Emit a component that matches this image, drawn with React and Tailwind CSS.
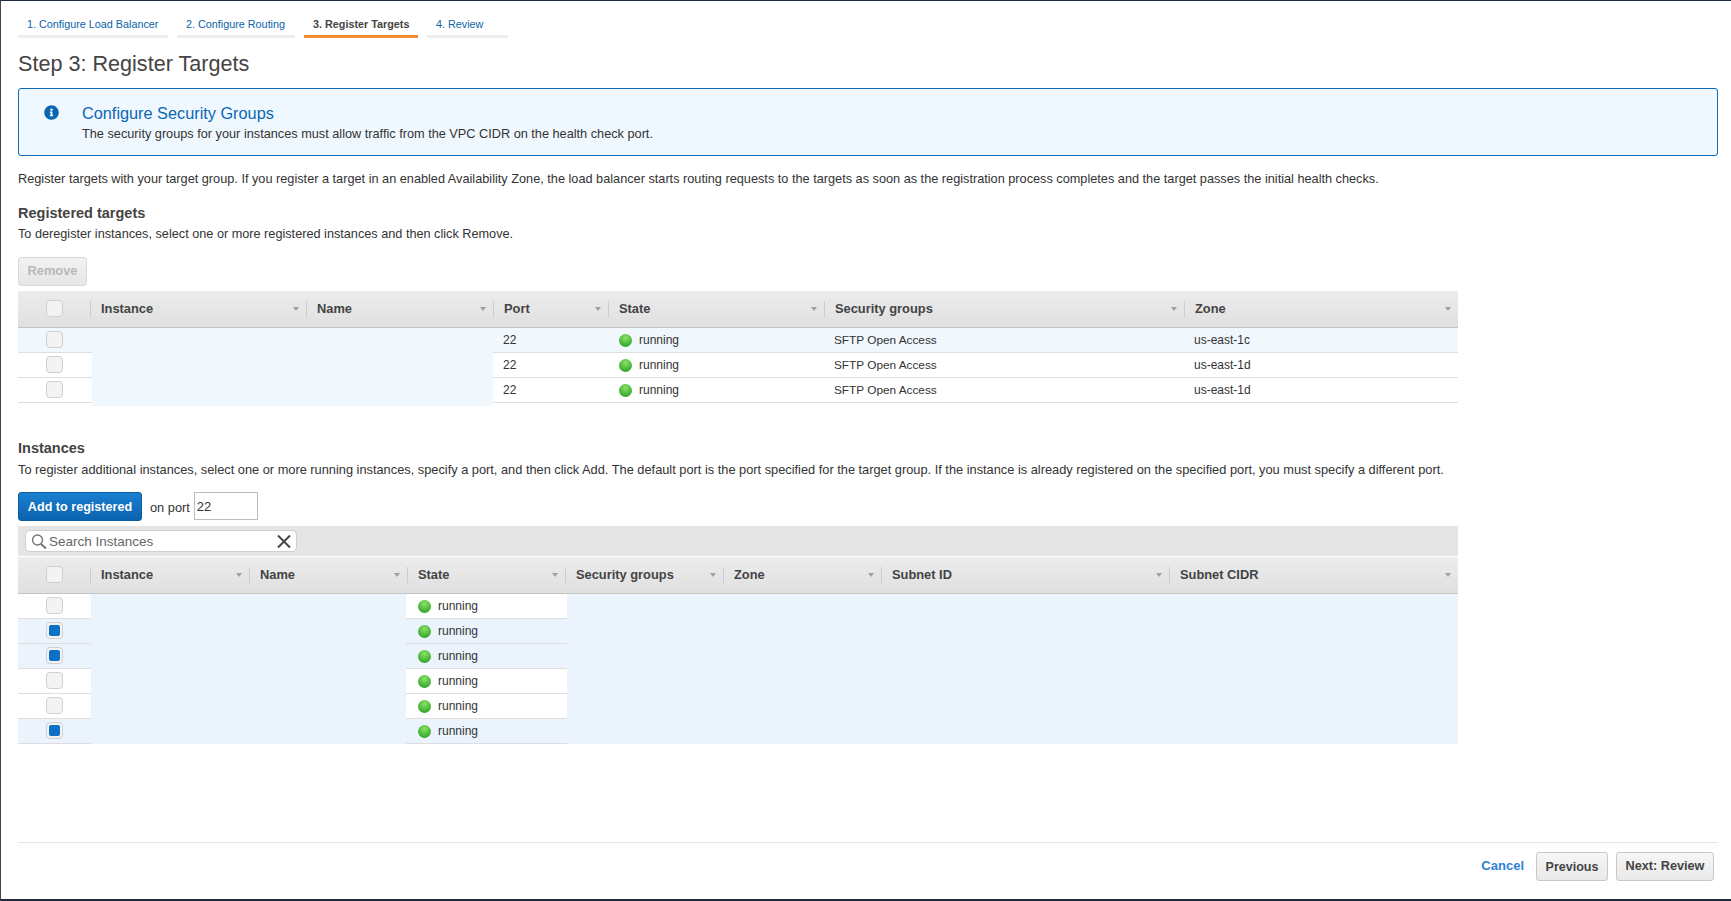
import React from "react";
import { FaInfoCircle } from "react-icons/fa";

const Tab = ({ w, active, children }) => (
  <div className={`h-[37px] flex items-center pl-[9px] border-b-[3px] text-[10.8px] ${w} ${active ? "border-[#f08c32] text-[#444] font-bold" : "border-[#eeeeee] text-[#0b63a8]"}`}>
    <span className="pt-[13px]">{children}</span>
  </div>
);

const Checkbox = ({ on }) => (
  <div className="w-[17px] h-[17px] mb-[2px] rounded-[4px] border border-[#cfcfcf] bg-[#f3f3f3] flex items-center justify-center">
    {on && <div className="w-[11px] h-[11px] rounded-[2px] bg-[#0c70c4]" />}
  </div>
);

const Dot = () => (
  <span className="inline-block w-[13px] h-[13px] rounded-full bg-[radial-gradient(circle_at_50%_30%,#8be366,#35a82d_75%)]" />
);

const Running = ({ pad }) => (
  <div className={`flex items-center gap-[7px] text-[12px] text-[#333] ${pad}`}>
    <Dot />
    <span>running</span>
  </div>
);

const HeadCell = ({ label }) => (
  <div className="flex items-center h-full min-w-0">
    <div className="w-[1px] h-[17px] bg-[#cdcdcd]" />
    <span className="pl-[10px] flex-1 text-[12.85px] font-bold text-[#444]">{label}</span>
    <svg width="6" height="4" viewBox="0 0 6 4" className="mr-[7px]"><path d="M0 0H6L3 4Z" fill="#a0a0a0" /></svg>
  </div>
);

const Header = ({ cols, labels }) => (
  <div className={`grid ${cols} h-[37px] bg-linear-to-b from-[#ececec] to-[#e0e0e0] border-b border-[#c4c4c4]`}>
    <div className="flex items-center pl-[28px]"><Checkbox /></div>
    {labels.map((l) => <HeadCell key={l} label={l} />)}
  </div>
);

const registered = [
  { zone: "us-east-1c", sel: true },
  { zone: "us-east-1d" },
  { zone: "us-east-1d" },
];

const regCols = "grid-cols-[73px_216px_187px_115px_216px_360px_273px]";
const regHeadCols = "grid-cols-[72px_216px_187px_115px_216px_360px_274px]";

const RegisteredTable = () => (
  <div className="relative w-[1440px] mt-[5px]">
    <Header cols={regHeadCols} labels={["Instance", "Name", "Port", "State", "Security groups", "Zone"]} />
    {registered.map((r, i) => (
      <div key={i} className={`grid ${regCols} h-[25px] border-b border-[#dedede] items-center text-[12px] text-[#333] ${r.sel ? "bg-[#f0f7fd]" : "bg-white"}`}>
        <div className="pl-[28px] flex items-center"><Checkbox /></div>
        <div />
        <div />
        <div className="pl-[9px]">22</div>
        <Running pad="pl-[10px]" />
        <div className="pl-[9px] pt-[1px] text-[11.8px]">SFTP Open Access</div>
        <div className="pl-[9px]">{r.zone}</div>
      </div>
    ))}
    <div className="absolute left-[74px] top-[37px] w-[401px] h-[78px] bg-[#f0f7fd]" />
  </div>
);

const instHeadCols = "grid-cols-[72px_159px_158px_158px_158px_158px_288px_289px]";

const InstanceRow = ({ on }) => (
  <div className="flex h-[25px]">
    <div className={`w-[73px] flex items-center pl-[28px] border-b border-[#dedede] ${on ? "bg-[#ebf3fd]" : "bg-white"}`}><Checkbox on={on} /></div>
    <div className="w-[315px] bg-[#ebf3fd]" />
    <div className={`w-[161px] flex items-center border-b border-[#dedede] ${on ? "bg-[#ebf3fd]" : "bg-white"}`}><Running pad="pl-[12px]" /></div>
    <div className="w-[891px] bg-[#ebf3fd]" />
  </div>
);

export default function App() {
  return (
    <div className="h-[901px] w-[1731px] overflow-hidden bg-white border-t border-t-[#1f2d3a] border-b-2 border-b-[#1f2d3a] border-l border-l-[#444] pl-[17px] font-['Liberation_Sans',Arial,sans-serif] text-[#444] flex flex-col">
      <div className="flex gap-[9px] h-[37px] shrink-0">
        <Tab w="w-[150px]">1. Configure Load Balancer</Tab>
        <Tab w="w-[118px]">2. Configure Routing</Tab>
        <Tab w="w-[114px]" active>3. Register Targets</Tab>
        <Tab w="w-[81px]">4. Review</Tab>
      </div>

      <div className="h-[50px] flex items-center pt-[3px] text-[21.6px] text-[#444] shrink-0">Step 3: Register Targets</div>

      <div className="w-[1700px] h-[68px] shrink-0 rounded-[3px] border border-[#0e6ab4] bg-[#f0f8ff] flex">
        <div className="w-[63px] pl-[25px] pt-[16px] text-[#0b66b2] text-[15px]"><FaInfoCircle /></div>
        <div className="flex flex-col">
          <div className="mt-[13px] text-[16.3px] leading-[22px] text-[#0b66b2]">Configure Security Groups</div>
          <div className="text-[12.72px] leading-[20px] text-[#333]">The security groups for your instances must allow traffic from the VPC CIDR on the health check port.</div>
        </div>
      </div>

      <div className="h-[46px] shrink-0 flex items-center text-[12.72px] text-[#333]">Register targets with your target group. If you register a target in an enabled Availability Zone, the load balancer starts routing requests to the targets as soon as the registration process completes and the target passes the initial health checks.</div>

      <div className="h-[22px] shrink-0 flex items-center pt-[2px] text-[14.5px] font-bold text-[#444]">Registered targets</div>
      <div className="h-[20px] shrink-0 flex items-center pt-[1px] text-[12.7px] text-[#333]">To deregister instances, select one or more registered instances and then click Remove.</div>

      <button className="mt-[13px] w-[69px] h-[29px] shrink-0 rounded-[3px] border border-[#d8d8d8] bg-linear-to-b from-[#f2f2f2] to-[#e6e6e6] pb-[2px] text-[12.8px] font-bold text-[#b8b8b8]">Remove</button>

      <RegisteredTable />

      <div className="mt-[34px] h-[22px] shrink-0 flex items-center pt-[2px] text-[14.5px] font-bold text-[#444]">Instances</div>
      <div className="h-[22px] shrink-0 flex items-center text-[12.8px] text-[#333]">To register additional instances, select one or more running instances, specify a port, and then click Add. The default port is the port specified for the target group. If the instance is already registered on the specified port, you must specify a different port.</div>

      <div className="mt-[11px] h-[29px] shrink-0 flex items-start">
        <button className="w-[124px] h-[29px] rounded-[3px] border border-[#0a5ea3] bg-linear-to-b from-[#1a7fd0] to-[#0b63ae] pt-[1px] text-[12.6px] font-bold text-white">Add to registered</button>
        <span className="ml-[8px] mt-[6px] text-[12.8px] text-[#333]">on port</span>
        <input readOnly value="22" className="ml-[4px] w-[64px] h-[28px] border border-[#bcbcbc] px-[2px] text-[13px] text-[#333] outline-none" />
      </div>

      <div className="mt-[5px] w-[1440px] h-[30px] shrink-0 bg-[#e5e5e5] flex items-center pl-[7px]">
        <div className="w-[272px] h-[22px] rounded-[5px] border border-[#cfcfcf] bg-white flex items-center pl-[5px] pr-[5px]">
          <svg width="16" height="15" viewBox="0 0 16 15" fill="none" stroke="#777" strokeWidth="1.4"><circle cx="6.5" cy="6" r="5" /><path d="M10 10L15 14.5" strokeWidth="2" /></svg>
          <input readOnly placeholder="Search Instances" className="flex-1 min-w-0 ml-[2px] pt-[2px] text-[13.5px] text-[#666] placeholder:text-[#666] outline-none bg-transparent" />
          <svg width="14" height="13" viewBox="0 0 14 13" stroke="#444" strokeWidth="2"><path d="M1 0.5L13 12.5M13 0.5L1 12.5" /></svg>
        </div>
      </div>

      <div className="w-[1440px] mt-[1px] shrink-0">
        <Header cols={instHeadCols} labels={["Instance", "Name", "State", "Security groups", "Zone", "Subnet ID", "Subnet CIDR"]} />
        {[false, true, true, false, false, true].map((on, i) => <InstanceRow key={i} on={on} />)}
      </div>

      <div className="mt-[98px] w-[1700px] shrink-0 border-t border-[#e6e6e6] pt-[9px] pr-[4px] flex justify-end items-center">
        <span className="text-[13px] font-bold text-[#2e7fd6] mr-[12px] -mt-[2px]">Cancel</span>
        <button className="w-[72px] h-[29px] rounded-[3px] border border-[#c8c8c8] bg-linear-to-b from-[#f6f6f6] to-[#e9e9e9] pt-[1px] text-[12.5px] font-bold text-[#444] mr-[8px]">Previous</button>
        <button className="w-[98px] h-[29px] rounded-[3px] border border-[#c8c8c8] bg-linear-to-b from-[#f6f6f6] to-[#e9e9e9] pt-[1px] text-[12.7px] font-bold text-[#444]">Next: Review</button>
      </div>
    </div>
  );
}
